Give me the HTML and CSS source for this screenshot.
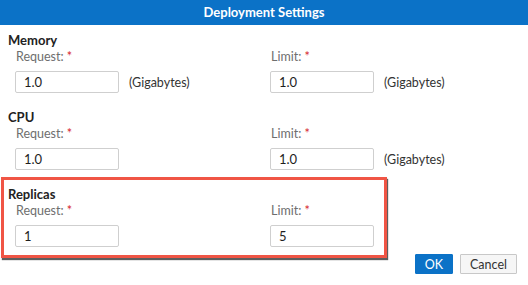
FILE: index.html
```html
<!DOCTYPE html>
<html>
<head>
<meta charset="utf-8">
<link rel="stylesheet" href="styles.css">
</head>
<body>
<div class="dialog">
  <div class="titlebar">Deployment Settings</div>
  <div class="content">
    <div class="section">
      <div class="heading">Memory</div>
      <div class="cols">
        <div class="field">
          <div class="label">Request: <span class="req">*</span></div>
          <div class="row"><div class="input">1.0</div><span class="unit">(Gigabytes)</span></div>
        </div>
        <div class="field">
          <div class="label">Limit: <span class="req">*</span></div>
          <div class="row"><div class="input">1.0</div><span class="unit">(Gigabytes)</span></div>
        </div>
      </div>
    </div>
    <div class="section">
      <div class="heading">CPU</div>
      <div class="cols">
        <div class="field">
          <div class="label">Request: <span class="req">*</span></div>
          <div class="row"><div class="input">1.0</div></div>
        </div>
        <div class="field">
          <div class="label">Limit: <span class="req">*</span></div>
          <div class="row"><div class="input">1.0</div><span class="unit">(Gigabytes)</span></div>
        </div>
      </div>
    </div>
    <div class="section last">
      <div class="heading">Replicas</div>
      <div class="cols">
        <div class="field">
          <div class="label">Request: <span class="req">*</span></div>
          <div class="row"><div class="input">1</div></div>
        </div>
        <div class="field">
          <div class="label">Limit: <span class="req">*</span></div>
          <div class="row"><div class="input">5</div></div>
        </div>
      </div>
    </div>
    <div class="buttons">
      <button class="btn primary">OK</button>
      <button class="btn">Cancel</button>
    </div>
  </div>
  <div class="highlight"></div>
</div>
</body>
</html>
```
FILE: styles.css
```css
html, body {
  margin: 0;
  padding: 0;
  background: #fff;
}
body {
  font-family: Lato, "Open Sans", sans-serif;
  width: 528px;
  height: 285px;
  overflow: hidden;
}
.dialog {
  position: relative;
  width: 528px;
  height: 285px;
}
.titlebar {
  height: 25px;
  background: #0b72c7;
  color: #fff;
  font-weight: 700;
  font-size: 13px;
  line-height: 25px;
  text-align: center;
}
.content {
  padding: 7px 0 0 8px;
}
.section {
  margin-bottom: 16px;
}
.section.last {
  margin-bottom: 7px;
}
.heading {
  font-size: 13px;
  font-weight: 700;
  color: #222;
  line-height: 16px;
  height: 16px;
}
.cols {
  display: grid;
  grid-template-columns: 255px 255px;
  padding-left: 7px;
  margin-top: 1px;
}
.label {
  font-size: 12.5px;
  color: #6e6e6e;
  line-height: 16px;
  height: 16px;
  padding-left: 1px;
}
.req {
  color: #d6262b;
}
.row {
  display: flex;
  align-items: center;
  gap: 10px;
  margin-top: 6px;
}
.input {
  box-sizing: border-box;
  width: 104px;
  height: 22px;
  border: 1px solid #cfcfcf;
  border-radius: 2px;
  padding-left: 8px;
  font-size: 13px;
  line-height: 20px;
  color: #1e1e1e;
}
.unit {
  font-size: 12.5px;
  color: #333;
}
.buttons {
  display: flex;
  justify-content: flex-end;
  gap: 7px;
  padding-right: 11px;
}
.btn {
  box-sizing: border-box;
  height: 20px;
  font-family: Lato, "Open Sans", sans-serif;
  font-size: 12.5px;
  border: 1px solid #c8c8c8;
  background: #f6f6f6;
  color: #333;
  border-radius: 1px;
  padding: 0;
  width: 57px;
}
.btn.primary {
  width: 38px;
  background: #0b72c7;
  border-color: #0b72c7;
  color: #fff;
}
.highlight {
  position: absolute;
  left: 1px;
  top: 177px;
  width: 386px;
  height: 81px;
  box-sizing: border-box;
  border: 3px solid #f05545;
  box-shadow: 1px 2px 1px rgba(40, 40, 40, 0.75);
}
```
